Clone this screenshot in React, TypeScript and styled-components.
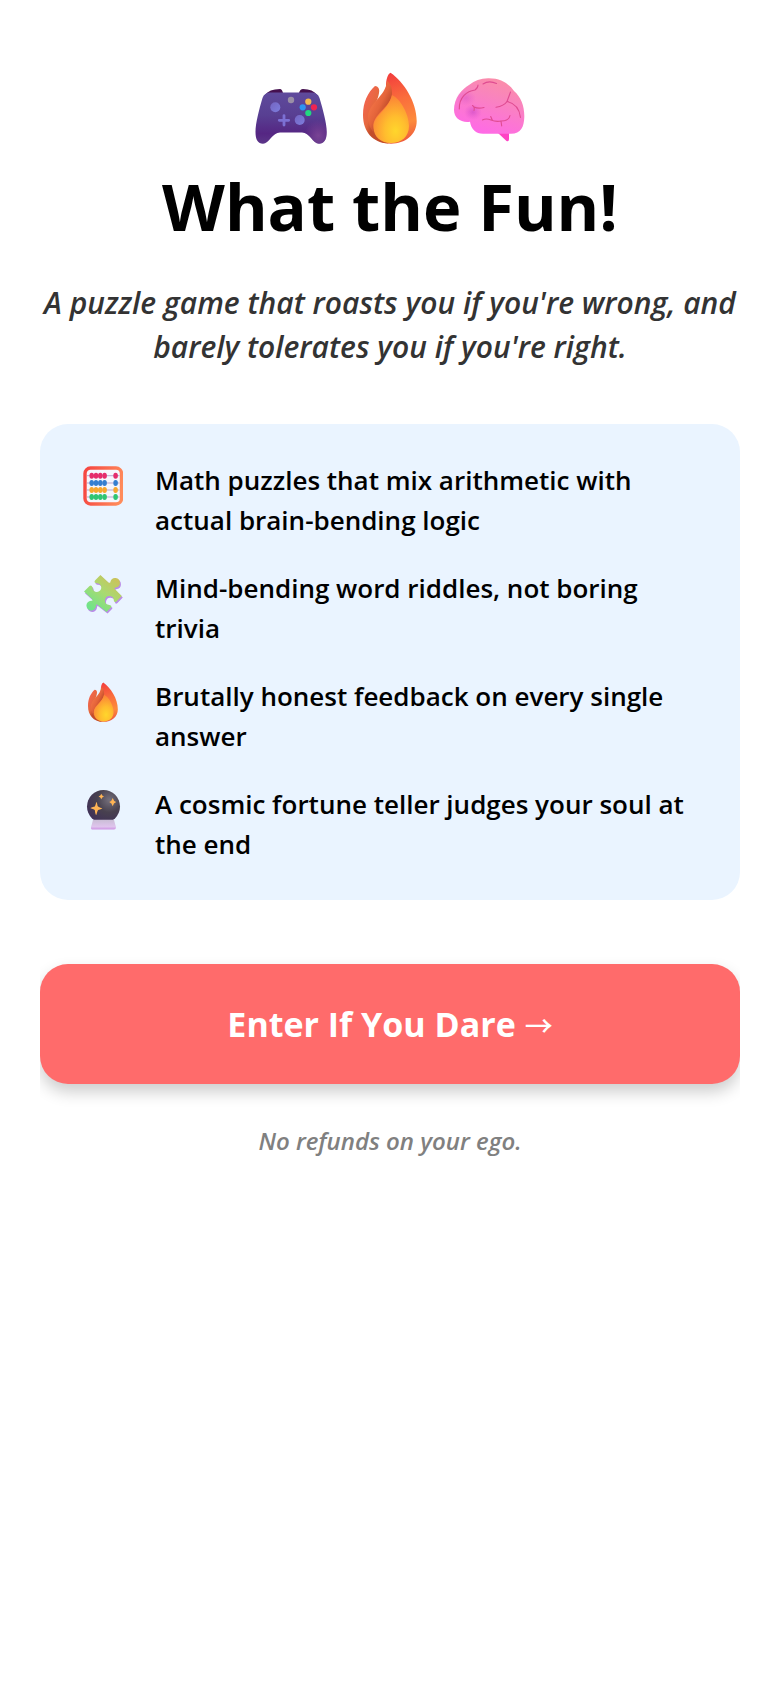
import React from "react";
import styled, { createGlobalStyle } from "styled-components";

const GlobalStyle = createGlobalStyle`
  * {
    box-sizing: border-box;
  }

  body {
    margin: 0;
    background: #fff;
    color: #000;
    font-family: "Open Sans", "Noto Sans", sans-serif;
  }
`;

const Page = styled.main`
  padding: 72px 40px;
`;

const Content = styled.div`
  display: flex;
  flex-direction: column;
  overflow: hidden;
  text-align: center;
`;

const EmojiRow = styled.div`
  display: flex;
  justify-content: center;
  gap: 27px;
`;

const Emoji = styled.svg<{ $size: number }>`
  display: block;
  flex: none;
  width: ${({ $size }) => $size}px;
  height: ${({ $size }) => $size}px;
`;

const Title = styled.h1`
  margin: 22px 0 35px;
  font-size: 65px;
  font-weight: 700;
  line-height: 80px;
`;

const Tagline = styled.p`
  margin: 0 0 55px;
  color: #333;
  font-size: 30px;
  font-style: italic;
  font-weight: 600;
  line-height: 44px;
`;

const FeatureList = styled.ul`
  display: flex;
  flex-direction: column;
  gap: 28px;
  margin: 0 0 64px;
  padding: 36px 40px;
  list-style: none;
  text-align: left;
  background: #eaf4ff;
  border-radius: 28px;
`;

const Feature = styled.li`
  display: flex;
  align-items: flex-start;
  gap: 28px;
  font-size: 26px;
  font-weight: 600;
  line-height: 40px;
`;

const FeatureIcon = styled.span`
  flex: none;
  padding: 6px 4px 0 3px;
`;

const EnterButton = styled.button`
  width: 100%;
  padding: 36px;
  border: none;
  border-radius: 28px;
  background: #ff6b6b;
  box-shadow: 0 8px 16px rgba(0, 0, 0, 0.2);
  color: #fff;
  cursor: pointer;
  font-family: inherit;
  font-size: 34px;
  font-weight: 700;
  line-height: 48px;
`;

const Arrow = styled.span`
  font-family: "Noto Sans CJK SC", sans-serif;
  font-size: 28px;
  font-weight: 500;
  line-height: 1;
`;

const Footnote = styled.p`
  margin: 41px 0 0;
  color: #808080;
  font-size: 24px;
  font-style: italic;
  font-weight: 600;
  line-height: 32px;
`;

type IconProps = { size: number };

const Controller = ({ size }: IconProps) => (
  <Emoji $size={size} viewBox="0 0 72 72" aria-hidden="true">
    <defs>
      <linearGradient id="pad" x1="0" y1="0" x2="0" y2="1">
        <stop offset="0" stopColor="#5f4a9c" />
        <stop offset="0.45" stopColor="#583f92" />
        <stop offset="0.8" stopColor="#552683" />
        <stop offset="1" stopColor="#5b3689" />
      </linearGradient>
      <radialGradient id="padGlow" cx="0.82" cy="0.84" r="0.3">
        <stop offset="0" stopColor="#794394" />
        <stop offset="1" stopColor="#794394" stopOpacity="0" />
      </radialGradient>
      <linearGradient id="stick" x1="0" y1="0" x2="1" y2="1">
        <stop offset="0" stopColor="#7465c2" />
        <stop offset="1" stopColor="#7d7ddd" />
      </linearGradient>
    </defs>
    <path d="M10 23Q14 17 25 17Q27 17 28 21H44Q45 17 48 17Q58 17 62 23Z" fill="#45104f" />
    <path
      d="M15 20.5H57Q62.5 20.5 64.5 26C68 38 71.7 51 71.7 60C71.7 68 69 71.7 64 71.7C58 71.7 54.5 60.5 47 60.5H25C17.5 60.5 14 71.7 8 71.7C3 71.7 .5 68 .5 60C.5 51 4 38 7.5 26Q9.5 20.5 15 20.5Z"
      fill="url(#pad)"
    />
    <path
      d="M57 20.5Q62.5 20.5 64.5 26C68 38 71.7 51 71.7 60C71.7 68 69 71.7 64 71.7C58 71.7 54.5 60.5 47 60.5H25L30 40Z"
      fill="url(#padGlow)"
    />
    <circle cx="20.3" cy="35.3" r="5" fill="url(#stick)" />
    <circle cx="44.7" cy="48" r="5" fill="url(#stick)" />
    <path d="M29 43.6V53M24.3 48.3H33.7" stroke="#7c70d4" strokeWidth="2.8" strokeLinecap="round" />
    <circle cx="36" cy="28" r="3.2" fill="#9a8fa6" />
    <circle cx="53.3" cy="29.7" r="3.1" fill="#f3b94f" />
    <circle cx="47.7" cy="35.3" r="3.1" fill="#2d94f0" />
    <circle cx="59" cy="35.3" r="3.1" fill="#ee2450" />
    <circle cx="53.3" cy="41" r="3.1" fill="#22d980" />
  </Emoji>
);

const Flame = ({ size }: IconProps) => (
  <Emoji $size={size} viewBox="0 0 72 72" aria-hidden="true">
    <defs>
      <linearGradient id="flameOuter" x1="0.4" y1="0" x2="0.6" y2="1">
        <stop offset="0" stopColor="#f23b3d" />
        <stop offset="0.4" stopColor="#fa6d3c" />
        <stop offset="0.75" stopColor="#fd8b3c" />
        <stop offset="1" stopColor="#ee5a3d" />
      </linearGradient>
      <linearGradient id="flameSide" x1="9" y1="36" x2="24" y2="42" gradientUnits="userSpaceOnUse">
        <stop offset="0" stopColor="#f0654c" />
        <stop offset="0.6" stopColor="#e5683d" />
        <stop offset="1" stopColor="#c24c2a" />
      </linearGradient>
      <linearGradient id="flameFold" x1="17" y1="34" x2="31" y2="41" gradientUnits="userSpaceOnUse">
        <stop offset="0" stopColor="#f07044" />
        <stop offset="0.5" stopColor="#e4643a" />
        <stop offset="1" stopColor="#bf4c2a" />
      </linearGradient>
      <radialGradient id="flameInner" cx="0.62" cy="0.75" r="0.75">
        <stop offset="0" stopColor="#ffd62c" />
        <stop offset="0.4" stopColor="#ffbd2e" />
        <stop offset="1" stopColor="#fc8137" />
      </radialGradient>
    </defs>
    <path d="M36.5 .7C50 10 62.7 30 62.7 49C62.7 63 51 71.7 37 71.7C23 71.7 14 62 14 48C14 31 32 29 32 14C32 8 33.5 2 36.5 .7Z" fill="url(#flameOuter)" />
    <path d="M21 14C24 14 26 17 25 21C23 33 15 38 17 52C18 61 26 68 35 71.6C19 71 9 60 9 43C9 30 14 20 21 14Z" fill="url(#flameSide)" />
    <path d="M33 9C32 25 13 31 14 47C15 58 23 67 33 70.5C25 67 19.5 62 19.5 53C20 41 38 34 38 21C38 15 36 11 33 9Z" fill="url(#flameFold)" />
    <path d="M38 23C47 27 55 43 55 54C55 65 47 71 37 71C27 71 19.5 65 19.5 55C19.5 43 34 39 38 23Z" fill="url(#flameInner)" />
  </Emoji>
);

const Brain = ({ size }: IconProps) => (
  <Emoji $size={size} viewBox="0 0 72 72" aria-hidden="true">
    <defs>
      <linearGradient id="brain" x1="0.75" y1="0" x2="0.35" y2="1">
        <stop offset="0" stopColor="#fb8fa6" />
        <stop offset="0.35" stopColor="#f984bd" />
        <stop offset="1" stopColor="#ff69e8" />
      </linearGradient>
      <radialGradient id="brainShade" cx="0.5" cy="0.5" r="0.5">
        <stop offset="0" stopColor="#c846c6" stopOpacity="0.6" />
        <stop offset="1" stopColor="#d94fce" stopOpacity="0" />
      </radialGradient>
    </defs>
    <path d="M45 61H56V67Q56 70 53.5 69Z" fill="#ff43c4" />
    <path
      d="M35 6.3C48 6 56 12 61 19C68 25 71.5 34 71.3 45C71 55 68 61.7 58 61.7H30C23 61.7 18 57 17 49.7C8 51 1 46 1 38C1 26 9 17 16 13Q24 6.5 35 6.3Z"
      fill="url(#brain)"
    />
    <ellipse cx="20" cy="40" rx="9" ry="8" fill="url(#brainShade)" />
    <ellipse cx="13" cy="26" rx="10" ry="8" fill="url(#brainShade)" opacity="0.6" />
    <g fill="none" stroke="#df4b91" strokeWidth="1.1" strokeLinecap="round" strokeLinejoin="round">
      <path d="M6.3 37C6 25 14 19 22 18Q25 16 25 13" />
      <path d="M30 12Q36 8 43.5 11.5" />
      <path d="M57.5 20L54 29.5Q51 34 43 35.3" />
      <path d="M54 29.5Q66 32 67.5 45.5" />
      <path d="M19.5 33.5Q22 35 21 38.5M21 35Q25 37 31 35.5" />
      <path d="M29.5 48Q33 46 38 48T48 49Q56 49 57 43.5M37.7 44.5L39.5 48.5M48 49L48.7 54" />
    </g>
  </Emoji>
);

const beadRows = [
  { y: 9.7, color: "#e52c6c" },
  { y: 17, color: "#357fd0" },
  { y: 24, color: "#f7a62f" },
  { y: 31, color: "#2fc573" },
];

const Abacus = ({ size }: IconProps) => (
  <Emoji $size={size} viewBox="0 0 40 40" aria-hidden="true">
    <defs>
      <linearGradient id="frame" x1="0" y1="0.4" x2="1" y2="0.6">
        <stop offset="0" stopColor="#f64842" />
        <stop offset="1" stopColor="#ff8b5b" />
      </linearGradient>
    </defs>
    <rect x="2" y="2" width="36.5" height="36" rx="5.5" fill="#f5f6fd" stroke="url(#frame)" strokeWidth="3.4" />
    {beadRows.map(({ y, color }) => (
      <g key={color} fill={color}>
        <path d={`M4 ${y}H36.5`} stroke="#b9a5cf" strokeWidth="1" />
        {[8.7, 13, 17.3, 21.6, 32.6].map((x) => (
          <ellipse key={x} cx={x} cy={y} rx="2.3" ry="3" />
        ))}
      </g>
    ))}
  </Emoji>
);

const PuzzlePiece = ({ size }: IconProps) => (
  <Emoji $size={size} viewBox="0 0 40 40" aria-hidden="true">
    <defs>
      <linearGradient id="piece" x1="32" y1="2" x2="8" y2="34" gradientUnits="userSpaceOnUse">
        <stop offset="0" stopColor="#cdc159" />
        <stop offset="0.5" stopColor="#a9da71" />
        <stop offset="1" stopColor="#71e389" />
      </linearGradient>
      <path
        id="pieceShape"
        d="M17.4 1L25.5 8.5Q27.5 9.5 27.5 7.5A4.8 4.8 0 1 1 33 13.5Q30.5 13.5 32 15.2L38.8 22L33.5 27.5Q31.5 29 30.8 26.5A4.4 4.4 0 1 0 25.5 30.8Q29.5 31.5 28 33.5L23.5 38L14.5 30.8Q13 29.5 13 32A4.8 4.8 0 1 1 8 26.8Q10.5 27 9 25L1 17.6L6.5 12Q8.5 10.5 9.5 13.4A4.4 4.4 0 1 0 13.4 9.2Q10.5 8.5 12 6.5Z"
      />
    </defs>
    <use href="#pieceShape" x="1" y="1.6" fill="#b98be8" />
    <use href="#pieceShape" fill="url(#piece)" />
  </Emoji>
);

const CrystalBall = ({ size }: IconProps) => (
  <Emoji $size={size} viewBox="0 0 40 40" aria-hidden="true">
    <defs>
      <radialGradient id="ball" cx="0.68" cy="0.3" r="0.75">
        <stop offset="0" stopColor="#75707c" />
        <stop offset="0.5" stopColor="#48414f" />
        <stop offset="1" stopColor="#403157" />
      </radialGradient>
      <linearGradient id="stand" x1="0" y1="0" x2="0" y2="1">
        <stop offset="0" stopColor="#c9bdd5" />
        <stop offset="0.7" stopColor="#dfc4ed" />
        <stop offset="1" stopColor="#cc91e2" />
      </linearGradient>
    </defs>
    <circle cx="20.5" cy="16.5" r="16.5" fill="url(#ball)" />
    <path d="M10 29.7H31Q32 34 33 37Q33 39.6 31 39.6H10Q7.5 39.6 8 37Q9 34 10 29.7Z" fill="url(#stand)" />
    <g fill="#ffb455">
      <path d="M13.3 12Q14 12 14.6 16Q15 17 19.3 18.3Q19.3 19 15 20Q14.4 21 13.3 25Q12.4 25 11.8 20Q11.3 19.2 7.5 18.3Q7.5 17.4 11.8 16.5Q12.4 15.7 13.3 12Z" />
      <path d="M29.7 8Q30.5 11 33.2 12Q30.5 13 29.7 16.2Q28.9 13 26.2 12Q28.9 11 29.7 8Z" />
      <path d="M18.3 3.8Q18.9 6 21 6.5Q18.9 7 18.3 9.2Q17.7 7 15.6 6.5Q17.7 6 18.3 3.8Z" />
    </g>
  </Emoji>
);

const features = [
  { Icon: Abacus, text: "Math puzzles that mix arithmetic with actual brain-bending logic" },
  { Icon: PuzzlePiece, text: "Mind-bending word riddles, not boring trivia" },
  { Icon: Flame, text: "Brutally honest feedback on every single answer" },
  { Icon: CrystalBall, text: "A cosmic fortune teller judges your soul at the end" },
];

const App = () => {
  return (
    <>
      <GlobalStyle />
      <Page>
        <Content>
          <EmojiRow>
            <Controller size={72} />
            <Flame size={72} />
            <Brain size={72} />
          </EmojiRow>
          <Title>What the Fun!</Title>
          <Tagline>
            A puzzle game that roasts you if you're wrong, and barely tolerates you if you're right.
          </Tagline>
          <FeatureList>
            {features.map(({ Icon, text }) => (
              <Feature key={text}>
                <FeatureIcon>
                  <Icon size={40} />
                </FeatureIcon>
                <span>{text}</span>
              </Feature>
            ))}
          </FeatureList>
          <EnterButton type="button">
            Enter If You Dare <Arrow>→</Arrow>
          </EnterButton>
          <Footnote>No refunds on your ego.</Footnote>
        </Content>
      </Page>
    </>
  );
};

export default App;
